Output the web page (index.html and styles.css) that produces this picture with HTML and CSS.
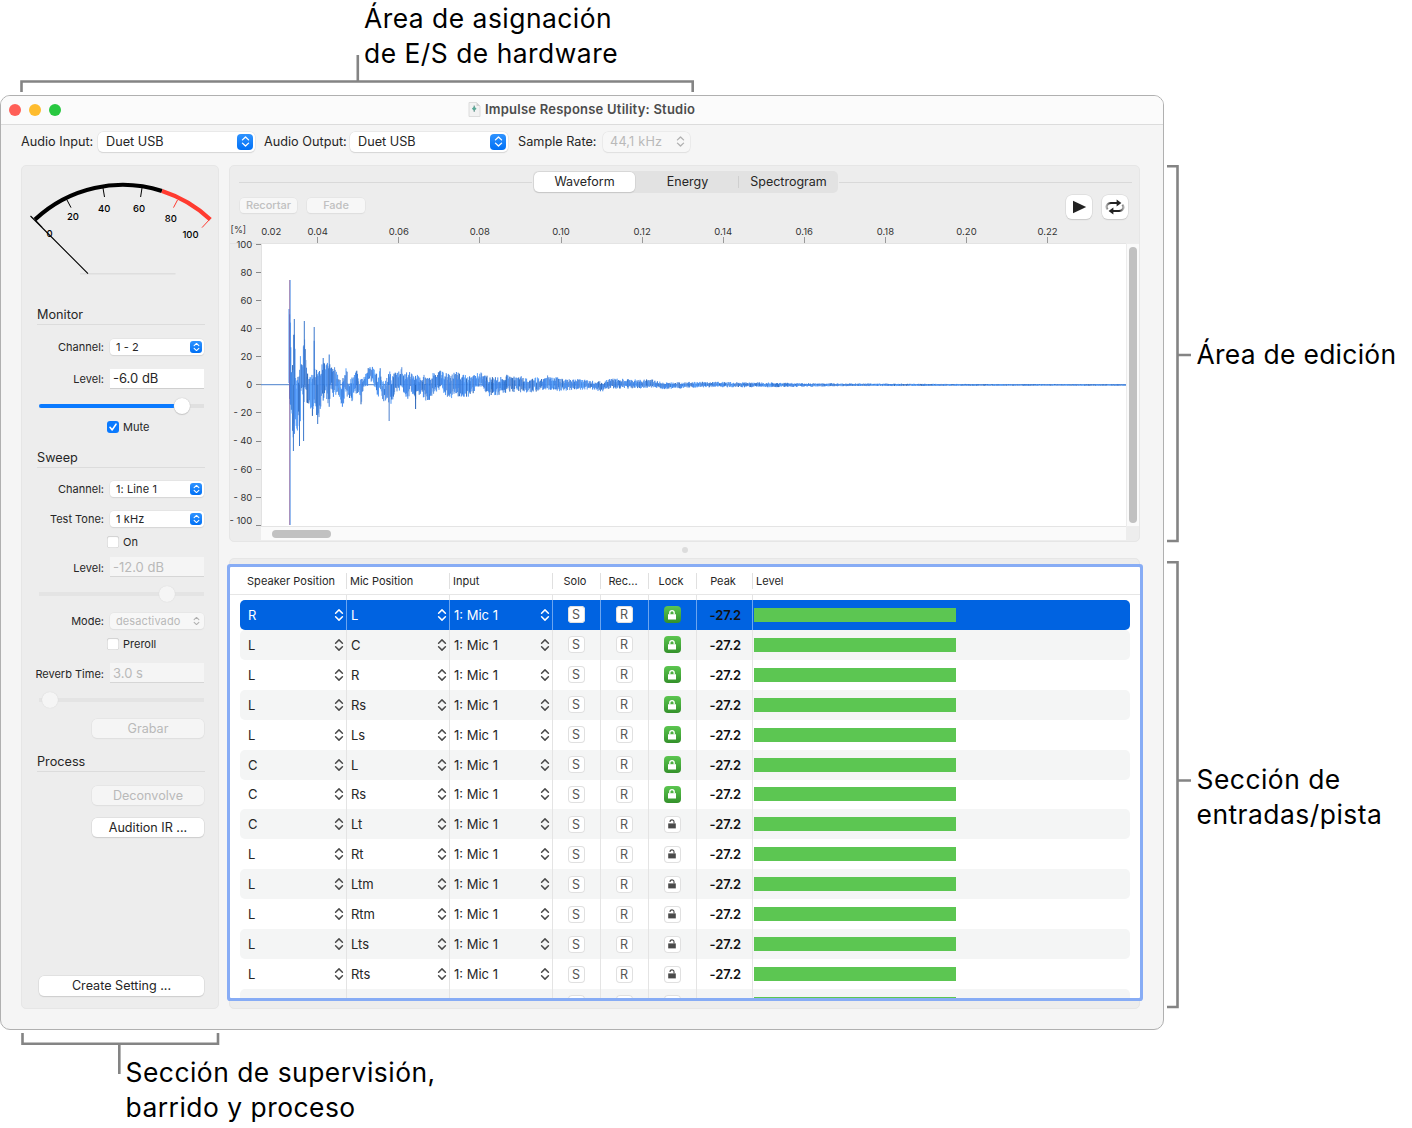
FILE: index.html
```html
<!DOCTYPE html>
<html lang="es">
<head>
<meta charset="utf-8">
<title>Impulse Response Utility</title>
<link rel="stylesheet" href="styles.css">
</head>
<body>
<svg class="defs" width="0" height="0" aria-hidden="true">
  <symbol id="updown" viewBox="0 0 10 14"><path d="M1.6 5.2 5 1.9l3.4 3.3M1.6 8.8 5 12.1l3.4-3.3" fill="none" stroke="currentColor" stroke-width="1.5" stroke-linecap="round" stroke-linejoin="round"/></symbol>
  <symbol id="locked" viewBox="0 0 10 12"><path d="M1 5.2h8v5.3H1z" fill="currentColor"/><path d="M2.8 5.5V3.8a2.2 2.2 0 0 1 4.4 0v1.7" fill="none" stroke="currentColor" stroke-width="1.3"/></symbol>
  <symbol id="unlocked" viewBox="0 0 10 12"><path d="M1.2 5.4h7.6v5H1.2z" fill="currentColor"/><path d="M3 3.9a2 2 0 0 1 4-.1v1.8" fill="none" stroke="currentColor" stroke-width="1.1"/></symbol>
</svg>

<header class="callout-top">
  <svg width="1412" height="95" fill="none" stroke="#848484" stroke-width="2.6"><path d="M21.5 92V81.5H692.7V92M357.8 81V55"/></svg>
  <p class="label"><span>Área de asignación</span><br><span>de E/S de hardware</span></p>
</header>

<div class="middle">
<main class="window">
  <div class="titlebar">
    <i class="dot red"></i><i class="dot yellow"></i><i class="dot green"></i>
    <h1>
      <svg width="13" height="15" viewBox="0 0 13 15"><path d="M1 .5h7.5L12 4v10.5H1z" fill="#f2f2f2" stroke="#dcdcdc"/><path d="M8.5.5V4H12z" fill="#d0d0d0"/><path d="M6.2 3.6v6.2" stroke="#4d7f78" stroke-width="1"/><path d="M3.8 6.7 6.2 4.5l2.4 2.2-2.4 2.1z" fill="#5aa897"/></svg>
      <span>Impulse Response Utility: Studio</span>
    </h1>
  </div>

  <div class="toolbar">
    <label class="t-in">Audio Input:</label>
    <div class="popup big"><span>Duet USB</span><b class="knob"><svg><use href="#updown"/></svg></b></div>
    <label class="t-out">Audio Output:</label>
    <div class="popup big second"><span>Duet USB</span><b class="knob"><svg><use href="#updown"/></svg></b></div>
    <label class="t-rate">Sample Rate:</label>
    <div class="popup big rate off"><span>44,1 kHz</span><b class="knob"><svg><use href="#updown"/></svg></b></div>
  </div>

  <div class="content">
    <aside class="panel side">
      <svg class="gauge" width="196" height="139" viewBox="22 166 196 139">
        <path d="M80 273.7H175.5" stroke="#dedede" stroke-width="1.5"/>
        <path d="M35 219.5A128.2 128.2 0 0 1 162 191" fill="none" stroke="#000" stroke-width="4.2"/>
        <path d="M162 191A128.2 128.2 0 0 1 210.3 219.5" fill="none" stroke="#ff3b30" stroke-width="4.2"/>
        <path d="M67 200l4 7.6M103 188l1.5 9M142 188l-1.4 9" stroke="#000"/>
        <path d="M177.5 200l-4 7.6M210 219l-8 8.6" stroke="#ff3b30"/>
        <path d="M30.5 216 88 273.6M35.4 220l7 7.6" stroke="#000" stroke-width="1.1"/>
        <g class="gauge-text"><text x="49.5" y="237">0</text><text x="73" y="220.4">20</text><text x="104.3" y="212">40</text><text x="139" y="212">60</text><text x="170.8" y="222">80</text><text x="190.5" y="238">100</text></g>
      </svg>

      <h2>Monitor</h2>
      <div class="row g12"><label>Channel:</label><div class="popup"><span>1 - 2</span><b class="knob"><svg><use href="#updown"/></svg></b></div></div>
      <div class="row g12"><label>Level:</label><div class="field"><span>-6.0 dB</span></div></div>
      <div class="slider g7"><i class="fill" style="width:142px"></i><i class="thumb" style="margin-left:134.5px"></i></div>
      <div class="check g1"><i class="box on"><svg viewBox="0 0 12 12"><path d="M3 6.3 5.2 8.9 9 3.2" fill="none" stroke="#fff" stroke-width="1.6" stroke-linecap="round" stroke-linejoin="round"/></svg></i><span>Mute</span></div>

      <h2 class="g11">Sweep</h2>
      <div class="row g11"><label>Channel:</label><div class="popup"><span>1: Line 1</span><b class="knob"><svg><use href="#updown"/></svg></b></div></div>
      <div class="row g10"><label>Test Tone:</label><div class="popup"><span>1 kHz</span><b class="knob"><svg><use href="#updown"/></svg></b></div></div>
      <div class="check g3"><i class="box"></i><span>On</span></div>
      <div class="row g5 low"><label>Level:</label><div class="field off"><span>-12.0 dB</span></div></div>
      <div class="slider g7 off"><i class="thumb" style="margin-left:119.5px"></i></div>
      <div class="row g7"><label>Mode:</label><div class="popup off"><span>desactivado</span><b class="knob"><svg><use href="#updown"/></svg></b></div></div>
      <div class="check g3"><i class="box"></i><span>Preroll</span></div>
      <div class="row g9 low"><label>Reverb Time:</label><div class="field off"><span>3.0 s</span></div></div>
      <div class="slider g7 off"><i class="thumb" style="margin-left:3px"></i></div>
      <button class="btn off g9"><span>Grabar</span></button>

      <h2 class="g13">Process</h2>
      <button class="btn off g14"><span>Deconvolve</span></button>
      <button class="btn g12"><span>Audition IR ...</span></button>
      <button class="btn wide"><span>Create Setting ...</span></button>
    </aside>

    <div class="right">
      <section class="panel editor">
        <div class="tabline">
          <hr>
          <div class="tabs"><span class="tab active"><span>Waveform</span></span><span class="tab"><span>Energy</span></span><span class="tab last"><span>Spectrogram</span></span></div>
          <hr>
        </div>
        <div class="tools">
          <button class="mini"><span>Recortar</span></button><button class="mini fade"><span>Fade</span></button>
          <button class="tool play"><svg width="16" height="16" viewBox="0 0 16 16"><path d="M2 1.7 15.2 8 2 14.3z" fill="#222"/></svg></button>
          <button class="tool"><svg width="20" height="16" viewBox="0 0 20 16">
            <defs><linearGradient id="lg"><stop offset="0" stop-color="#aaa"/><stop offset=".35" stop-color="#222"/></linearGradient><linearGradient id="rg"><stop offset=".65" stop-color="#222"/><stop offset="1" stop-color="#aaa"/></linearGradient></defs>
            <path d="M2.6 10.4C.6 8 1.6 4 6 4h7" fill="none" stroke="url(#lg)" stroke-width="2.1"/><path d="M11.6.4 16.4 4l-4.8 3.6z" fill="#222"/>
            <path d="M17.4 5.6C19.4 8 18.4 12 14 12H7" fill="none" stroke="url(#rg)" stroke-width="2.1"/><path d="M8.400 8.400 3.600 12l4.800 3.600z" fill="#222"/>
          </svg></button>
        </div>
        <div class="plot">
          <svg id="wave" width="896" height="302" viewBox="230 224 896 302">
            <rect x="261" y="243.5" width="865" height="283" fill="#fff"/>
            <path d="M230 243.5H1126" stroke="#e4e4e4"/>
            <path d="M261.5 244V526" stroke="#e2e2e2"/>
          </svg>
          <div class="vscroll"><i></i></div>
          <div class="hscroll"><i></i></div>
        </div>
      </section>
      <div class="splitter"><i></i></div>
      <section class="panel tracks">
        <div class="table">
          <div class="head"><div>Speaker Position</div><div>Mic Position</div><div>Input</div><div>Solo</div><div>Rec...</div><div>Lock</div><div>Peak</div><div>Level</div></div>
          <div class="rows" id="rows"><div class="tr spacer"><div></div><div></div><div></div><div></div><div></div><div></div><div></div><div></div></div></div>
        </div>
      </section>
    </div>
  </div>
</main>

<aside class="callout-right">
  <svg width="28" height="935" fill="none" stroke="#848484" stroke-width="2.6"><path d="M3 71.3H13.5V446H3M14 260H27M3 467.3H13.5V912H3M14 685.5H27"/></svg>
  <div class="labels">
    <p class="label edit"><span>Área de edición</span></p>
    <p class="label"><span>Sección de</span><br><span>entradas/pista</span></p>
  </div>
</aside>
</div>

<footer class="callout-bottom">
  <svg width="1412" height="98" fill="none" stroke="#848484" stroke-width="2.6"><path d="M22.5 3V13.7H218V3M119.3 14V44"/></svg>
  <p class="label"><span>Sección de supervisión,</span><br><span>barrido y proceso</span></p>
</footer>
<script src="app.js"></script>
</body>
</html>
```
FILE: styles.css
```css
* { box-sizing: border-box; }
body { margin: 0; width: 1412px; height: 1128px; overflow: hidden; background: #fff; color: #262626; font: 12.6px/16px Inter, "Liberation Sans", sans-serif; }
h1, h2, p, button, hr { margin: 0; padding: 0; font: inherit; border: 0; }
i, b { display: block; font-style: normal; font-weight: 400; }
svg { display: block; flex: none; }
.defs { display: none; }
span, label { white-space: nowrap; }

/* annotations */
.label { font-size: 26.4px; line-height: 35px; letter-spacing: .5px; color: #000; }
.callout-top, .callout-bottom { display: grid; }
.callout-top > *, .callout-bottom > * { grid-area: 1 / 1; }
.callout-top { height: 95px; }
.callout-top .label { padding: 1px 0 0 364px; }
.callout-bottom { height: 98px; }
.callout-bottom .label { padding: 25px 0 0 125.5px; }
.middle { display: flex; height: 935px; }
.callout-right { display: flex; }
.labels { padding-left: 4.5px; }
.label.edit { margin: 242px 0 390px; letter-spacing: .3px; }

/* window */
.window { width: 1164px; height: 935px; flex: none; border: 1px solid #b0b0b0; border-radius: 10px; background: #f5f5f5; display: flex; flex-direction: column; overflow: hidden; }
.titlebar { height: 29px; flex: none; background: #fbfbfb; border-bottom: 1px solid #dcdcdc; display: flex; align-items: center; padding-left: 8px; gap: 8px; }
.dot { width: 12px; height: 12px; border-radius: 50%; }
.dot.red { background: #ff5f57; }
.dot.yellow { background: #febc2e; }
.dot.green { background: #28c840; }
h1 { display: flex; align-items: center; gap: 4.5px; margin-left: 398.5px; padding-bottom: 2px; font-weight: 600; color: #4c4c4c; font-size: 13px; letter-spacing: .23px; }

.toolbar { height: 40px; flex: none; display: flex; align-items: center; padding: 0 0 7px 20px; }
.toolbar label { font-size: 12.7px; }
.t-in { width: 77px; }
.t-out { width: 86px; margin-left: 9px; }
.toolbar .t-rate { width: 85px; margin-left: 10px; padding: 1px 0 0; }

.popup { height: 16px; flex: 1; border-radius: 4px; background: #fff; box-shadow: 0 0 0 .5px #dedede, 0 1px 1px #cfcfcf; display: flex; align-items: center; justify-content: space-between; padding: 0 2px 0 6px; font-size: 11px; letter-spacing: .1px; }
.knob { width: 12px; height: 12px; border-radius: 3px; background: linear-gradient(#2f93ff, #0070f5); color: #fff; display: grid; place-items: center; }
.knob svg { width: 7px; height: 10px; }
.popup.big { flex: none; width: 157px; height: 20px; border-radius: 5px; padding: 0 2px 0 8px; font-size: 12.7px; letter-spacing: 0; }
.popup.big.second { width: 158px; }
.popup.big.rate { width: 87px; padding-left: 7px; letter-spacing: .2px; }
.big .knob { width: 16px; height: 16px; border-radius: 4px; }
.big .knob svg { width: 9px; height: 13px; }
.off.popup { background: #f7f7f7; color: #b9b9b9; box-shadow: 0 0 0 .5px #e2e2e2, 0 1px 1px #dedede; }
.off .knob { background: none; color: #b0b0b0; }

.content { display: flex; gap: 10px; padding: 0 0 0 20px; }
.panel { background: #ededed; border: 1px solid #e6e6e6; border-radius: 5px; }

/* left column */
.side { width: 198px; height: 844px; display: flex; flex-direction: column; padding: 0 13px 12px 15px; }
.gauge { margin-left: -15px; }
.gauge-text { font-size: 9.5px; font-weight: 500; text-anchor: middle; }
h2 { height: 20px; line-height: 20px; border-bottom: 1.5px solid #dcdcdc; flex: none; font-size: 12.7px; }
.row, .check, .slider { height: 20px; flex: none; display: flex; align-items: center; font-size: 11px; }
.row { padding-right: 1px; gap: 6px; }
.row label { width: 67px; display: flex; justify-content: flex-end; }
.row.low label { padding-top: 2px; }
.row.low .field { line-height: 21px; }
.field { flex: 1; height: 20px; line-height: 19px; background: #fff; padding-left: 3px; font-size: 13px; border-bottom: 1px solid #cfcfcf; }
.field.off { background: #f5f5f5; color: #b9b9b9; border-bottom-color: #d6d6d6; }
.check { padding-left: 70px; gap: 4px; }
.box { width: 12px; height: 12px; border-radius: 3px; background: #fff; box-shadow: inset 0 0 0 .5px #c8c8c8, inset 0 1px 1px #ddd; }
.box.on { background: #0a7aff; box-shadow: none; }
.slider { margin-left: 2px; width: 165px; background: linear-gradient(#e0e0e0, #e0e0e0) center / 100% 4px no-repeat; display: grid; align-items: center; }
.slider > * { grid-area: 1 / 1; }
.fill { height: 4px; border-radius: 2px; background: #0a7aff; }
.thumb { width: 16px; height: 16px; border-radius: 50%; background: #fff; box-shadow: 0 0 1px #aaa, 0 1px 1px #ccc; }
.slider.off { background-image: linear-gradient(#e4e4e4, #e4e4e4); }
.slider.off .thumb { background: #f5f5f5; box-shadow: 0 0 1px #ccc; }
.btn { height: 19px; width: 112px; align-self: flex-end; margin-right: 1px; margin-bottom: 1px; flex: none; background: #fff; border-radius: 5px; color: #262626; font-size: 12.6px; line-height: 18px; box-shadow: 0 0 0 .5px #d6d6d6, 0 1px 1px #c6c6c6; }
.btn.off { background: #f5f5f5; color: #b9b9b9; box-shadow: 0 0 0 .5px #e0e0e0, 0 1px 1px #dedede; }
.btn.wide { width: 165px; margin-top: auto; margin-bottom: 0; height: 20px; }
.g1 { margin-top: 1px; }
.g3 { margin-top: 3px; }
.g5 { margin-top: 5px; }
.g7 { margin-top: 7px; }
.g9 { margin-top: 9px; }
.g10 { margin-top: 10px; }
.g11 { margin-top: 11px; }
.g12 { margin-top: 12px; }
.g13 { margin-top: 13px; }
.g14 { margin-top: 14px; }

/* waveform editor */
.right { width: 911px; display: flex; flex-direction: column; }
.editor { height: 377px; }
.tabline { display: flex; align-items: center; padding: 5px 7px 0 9px; height: 27px; }
.tabline hr { flex: 1; height: 1px; background: #d9d9d9; }
.tabs { width: 305px; height: 22px; border-radius: 5px; background: #e2e2e2; display: flex; align-items: center; margin: 0 1px; }
.tab { width: 101px; height: 20px; line-height: 19px; text-align: center; margin: 0 1px; font-size: 12.5px; }
.tab.active { background: #fff; border-radius: 5px; box-shadow: 0 0 0 .5px #ccc, 0 1px 1px #c4c4c4; }
.tab.last { flex: 1; position: relative; }
.tab.last::before { content: ""; position: absolute; left: -2px; top: 4px; width: 1px; height: 12px; background: #cfcfcf; }
.tools { display: flex; align-items: flex-start; height: 31px; padding: 2px 11px 0 10px; }
.mini { width: 57px; height: 15px; margin: 3px 10px 0 0; line-height: 15px; border-radius: 4px; background: #f7f7f7; color: #c0c0c0; font-size: 11px; font-weight: 500; box-shadow: 0 0 0 .5px #e0e0e0, 0 1px 1px #dcdcdc; }
.mini.fade { width: 58px; }
.tool { width: 26px; height: 24px; border-radius: 6px; background: #fff; box-shadow: 0 0 0 .5px #d4d4d4, 0 1px 1px #c4c4c4; display: grid; place-items: center; margin-left: 10px; }
.tool.play { margin-left: auto; }
.plot { display: grid; grid-template: 302px 14px / 896px 13px; }
.axis { font-size: 9.5px; fill: #333; }
.axis.unit { font-size: 9px; }
.vscroll { background: #fafafa; border-left: 1px solid #ececec; margin-top: 20px; padding: 3px 0 0 2px; }
.vscroll i { width: 8px; height: 276px; border-radius: 4px; background: #c1c1c1; }
.hscroll { background: #fafafa; border-top: 1px solid #e4e4e4; margin-left: 31px; padding: 3px 0 0 11px; }
.hscroll i { width: 59px; height: 8px; border-radius: 4px; background: #c1c1c1; }

.splitter { height: 16px; display: grid; place-items: center; }
.splitter i { width: 6px; height: 6px; border-radius: 50%; background: #dcdcdc; }

/* track table */
.tracks { height: 451px; padding: 8px 0 10px; display: flex; }
.table { flex: none; width: 910px; background: #fff; box-shadow: 0 0 0 3px #87acf5; border-radius: 1px; overflow: hidden; display: flex; flex-direction: column; }
.head { height: 28px; flex: none; border-bottom: 1px solid #e6e6e6; padding: 6px 0 0 10px; font-size: 11px; }
.head, .tr { display: grid; grid-template-columns: 107px 103px 103px 48px 48px 48px 56px 1fr; }
.head > div { height: 16px; line-height: 16px; border-right: 1px solid #e0e0e0; padding-left: 3px; white-space: nowrap; }
.head > div:first-child { padding-left: 7px; letter-spacing: .05px; }
.head > div:nth-child(n+4):nth-child(-n+7) { padding: 0 3px 0 0; text-align: center; }
.head > div:last-child { border: 0; }
.rows { flex: 1; }
.tr { height: 29.93px; margin: 0 10px; border-radius: 5px; font-size: 13px; }
.tr.spacer { height: 5px; }
.tr:nth-child(odd):not(.spacer) { background: #f4f5f5; }
.tr > div { display: flex; align-items: center; justify-content: space-between; border-right: 1px solid #e4e4e4; padding: 0 2px 0 4px; }
.tr > div:first-child { padding-left: 8px; }
.tr > div:nth-child(n+4):nth-child(-n+6) { justify-content: center; padding: 0 1px 0 0; }
.tr > div:nth-child(7) { font-weight: 600; color: #111; justify-content: flex-end; padding: 0 11px 0 0; letter-spacing: -.1px; }
.tr > div:last-child { border: 0; padding: 0 0 0 1px; }
.tr svg { width: 10px; height: 14px; color: #4a4a4a; }
.tr .sq { width: 17px; height: 17px; border-radius: 4px; background: #fff; box-shadow: inset 0 0 0 1px #e0e0e0; display: grid; place-items: center; color: #555; font-size: 12.5px; line-height: 17px; }
.tr .sq svg { width: 10px; height: 12px; }
.tr .sq.lock { background: linear-gradient(#5cc650, #33912a); box-shadow: none; }
.tr .sq.lock svg { color: #fff; }
.bar { height: 14px; background: #5cc652; }
.tr.sel { background: #0063e1 !important; color: #fff; }
.tr.sel > div { border-color: #6ba5f0; }
.tr.sel > div:last-child { border: 0; }
.tr.sel > div > svg { color: #fff; }
```
FILE: app.js
```js
const NS = 'http://www.w3.org/2000/svg';
const wave = document.getElementById('wave');

function add(tag, attrs, text) {
  const el = document.createElementNS(NS, tag);
  for (const k in attrs) el.setAttribute(k, attrs[k]);
  if (text) el.textContent = text;
  wave.appendChild(el);
}

// time ruler
add('text', { class: 'axis', x: 271.3, y: 235.4, 'text-anchor': 'middle' }, '0.02');
for (let i = 0; i < 10; i++) {
  const x = 317.7 + i * 81.1;
  add('text', { class: 'axis', x: x, y: 235.4, 'text-anchor': 'middle' }, (0.04 + i * 0.02).toFixed(2));
  add('path', { d: `M${Math.floor(x) + 0.5} 237V243`, stroke: '#999' });
}
// amplitude ruler
add('text', { class: 'axis unit', x: 238.3, y: 233, 'text-anchor': 'middle' }, '[%]');
for (let i = 0; i <= 10; i++) {
  const v = 100 - i * 20;
  const y = 244.3 + i * 28.1;
  add('text', { class: 'axis', x: 252.3, y: (i === 10 ? 524.4 : y + 3.4), 'text-anchor': 'end' }, v < 0 ? '- ' + -v : String(v));
  add('path', { d: `M256 ${Math.floor(y) + 0.5}H261`, stroke: '#888' });
}

// impulse response: [x, top, bottom] control points of the envelope
const env = [
  [289, 309, 386], [290.5, 300, 420], [291.5, 356, 425], [292.5, 354, 432], [293.3, 340, 451], [294.3, 319, 435],
  [295.3, 358, 435], [296.5, 384, 428], [297.5, 366, 431], [298.8, 366, 420], [299.6, 352, 446], [301, 355, 403],
  [302.7, 361, 397], [303.6, 330, 440], [304.3, 320.6, 395], [305.3, 341, 390], [307, 363, 411], [309.3, 378, 406],
  [312, 373, 420], [313.5, 376, 406], [314, 327, 411], [315, 372, 406], [317.7, 363, 424], [320, 366, 412],
  [322, 359, 401], [323.3, 355, 402], [325.5, 363, 391], [327.3, 360, 407], [329.3, 353, 407], [331.3, 368, 390],
  [333.5, 364, 395], [335.3, 365, 396], [337.5, 375, 391], [339.3, 378, 395], [341.3, 384, 405], [343, 376, 409],
  [345, 367, 396], [347, 371, 395], [349, 382, 400], [351, 380, 398], [353, 376, 401], [355, 373, 394],
  [356.7, 366, 391], [359, 379, 395], [361, 375, 404], [363.5, 376, 389], [367, 373, 386], [369.3, 364, 382],
  [371.6, 363, 381], [373.7, 370, 384], [376, 374, 394], [378, 377, 397], [379.7, 368, 390], [381.7, 375, 396],
  [383.7, 384, 402], [386, 380, 399], [389.6, 369, 405], [392, 379, 401], [394, 373, 393], [398, 371, 390],
  [401, 366, 388], [404, 374, 393], [407.3, 372, 401], [411, 374, 391], [415.3, 377, 398], [420, 375, 394],
  [426, 377, 399], [431, 379, 398], [434.5, 371, 391], [441, 372, 388], [448, 375, 397], [457, 373, 396],
  [468, 377, 396], [481, 373, 386], [489, 378, 395], [498, 378, 394], [508, 375, 391], [516, 376, 391],
  [528, 379, 392], [540, 378, 390], [549, 376, 389], [564, 380, 391], [577, 379, 389], [590, 381, 389],
  [603, 382, 391], [610, 379, 388], [640, 380, 388], [655, 380, 387], [662, 383, 389], [700, 382, 387],
  [750, 382.5, 387], [780, 383, 387], [850, 383.6, 386], [950, 384, 385.8], [1126, 384.4, 385.3]
];
let seed = 77;
const rnd = () => (seed = (seed * 16807) % 2147483647) / 2147483647;
const blues = ['#2763b8', '#4b93f5', '#2f76d6', '#559ffa', '#5a8fdc', '#3f86ea'];
const paths = blues.map(() => '');
let k = 0;
for (let x = 289; x < 1125.5; x += 0.6) {
  while (env[k + 1][0] < x) k++;
  const [x0, t0, b0] = env[k];
  const [x1, t1, b1] = env[k + 1];
  const f = (x - x0) / (x1 - x0);
  const top = t0 + (t1 - t0) * f;
  const bottom = b0 + (b1 - b0) * f;
  const h = bottom - top;
  const grow = x > 330 ? 0.08 : 0;
  const ragged = x > 330 ? 0.45 : 0.3;
  const a = top + h * (ragged * rnd() - grow);
  const b = bottom - h * (ragged * rnd() - grow);
  paths[Math.floor(rnd() * blues.length)] += `M${x.toFixed(1)} ${a.toFixed(1)}V${Math.max(b, a + 1).toFixed(1)}`;
}
add('path', { d: 'M261 384.7H1126', stroke: '#4a80cc', 'stroke-width': 1 });
paths.forEach((d, i) => add('path', { d, stroke: blues[i], 'stroke-width': 1, fill: 'none' }));
// isolated peaks
add('path', { d: 'M294.3 319V385M293.4 385V451M299.5 385V446M303.6 385V441M304.3 321V385M314.2 327V385M317.7 385V424', stroke: '#3b78cc', 'stroke-width': 1 });
add('path', { d: 'M389.2 385V421', stroke: '#7fa4dc', 'stroke-width': 1.4 });
add('path', { d: 'M415.6 385V409', stroke: '#2763b8', 'stroke-width': 1 });
add('path', { d: 'M290 280V525', stroke: '#2f78e0', 'stroke-width': 1 });
add('path', { d: 'M289.5 280V525', stroke: '#c2506e', 'stroke-width': 0.4 });

// track rows
const tracks = [
  ['R', 'L', 1], ['L', 'C', 1], ['L', 'R', 1], ['L', 'Rs', 1], ['L', 'Ls', 1], ['C', 'L', 1], ['C', 'Rs', 1],
  ['C', 'Lt', 0], ['L', 'Rt', 0], ['L', 'Ltm', 0], ['L', 'Rtm', 0], ['L', 'Lts', 0], ['L', 'Rts', 0]
];
const arrows = '<svg><use href="#updown"/></svg>';
const row = (sp, mic, input, s, r, peak, lock, cls) => `
<div class="tr${cls}">
  <div><span>${sp}</span>${arrows}</div><div><span>${mic}</span>${arrows}</div><div><span>${input}</span>${arrows}</div>
  <div><b class="sq">${s}</b></div><div><b class="sq">${r}</b></div>
  <div><b class="sq${lock ? ' lock' : ''}"><svg><use href="#${lock ? 'locked' : 'unlocked'}"/></svg></b></div>
  <div>${peak}</div><div><i class="bar" style="width:202px"></i></div>
</div>`;
document.getElementById('rows').insertAdjacentHTML('beforeend',
  tracks.map(([sp, mic, lock], i) => row(sp, mic, '1: Mic 1', 'S', 'R', '-27.2', lock, i === 0 ? ' sel' : '')).join('') +
  row('', '', '', '', '', '', 0, ''));
```
